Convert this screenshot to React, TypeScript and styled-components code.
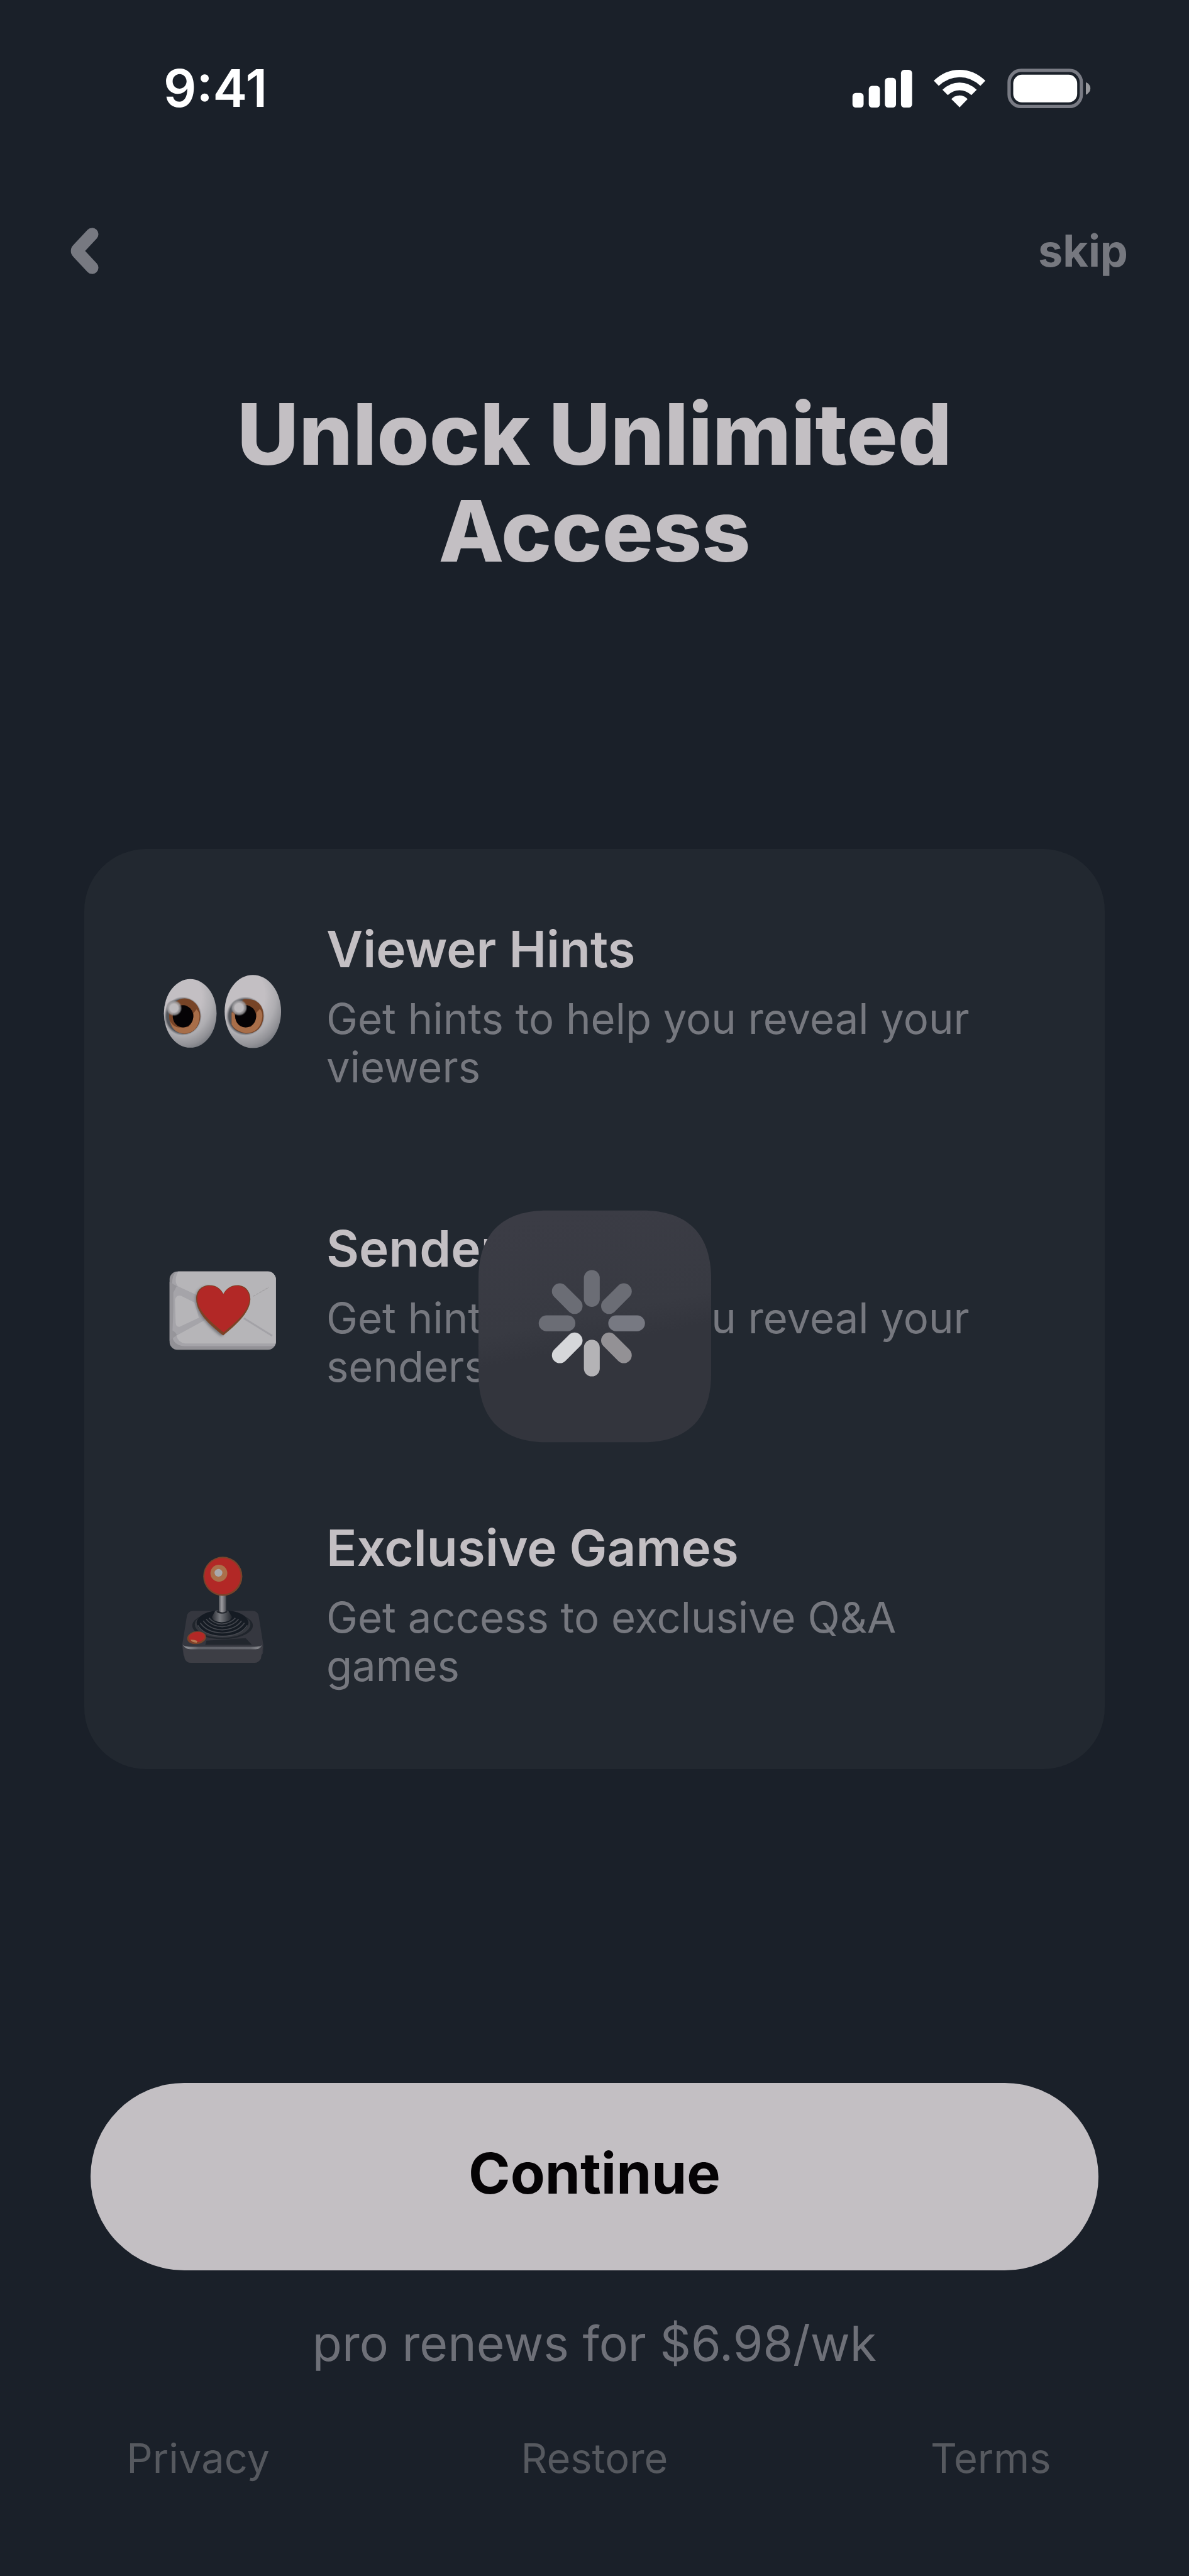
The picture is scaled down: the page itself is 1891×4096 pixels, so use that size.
import React from "react";
import styled, { createGlobalStyle } from "styled-components";

function App() {
  return (
    <>
      <GlobalStyle />
      <Screen>
        <StatusBar>
          <Time>9:41</Time>
          <StatusIcons />
        </StatusBar>
        <NavBar>
          <BackButton type="button" aria-label="Back">
            <svg width="45" height="74" viewBox="73 83 137 224" fill="none">
              <path
                d="M178 114 L109 188 Q102 195 109 202 L178 276"
                stroke="#777981"
                strokeWidth="61"
                strokeLinecap="round"
                strokeLinejoin="round"
              />
            </svg>
          </BackButton>
          <SkipButton type="button">skip</SkipButton>
        </NavBar>
        <Title>Unlock Unlimited Access</Title>
        <Card>
          {features.map((feature) => (
            <Feature key={feature.name}>
              {feature.icon}
              <div>
                <FeatureName>{feature.name}</FeatureName>
                <FeatureText>{feature.text}</FeatureText>
              </div>
            </Feature>
          ))}
          <Loader />
        </Card>
        <ContinueButton type="button">Continue</ContinueButton>
        <Renewal>pro renews for $6.98/wk</Renewal>
        <Footer>
          <FooterLink href="#privacy">Privacy</FooterLink>
          <FooterLink href="#restore">Restore</FooterLink>
          <FooterLink href="#terms">Terms</FooterLink>
        </Footer>
      </Screen>
    </>
  );
}

function StatusIcons() {
  return (
    <svg width="381" height="64" viewBox="105 60 1160 195" aria-hidden="true">
      <g fill="#fff">
        <rect x="110" y="178" width="54" height="71" rx="16" />
        <rect x="189" y="144" width="54" height="105" rx="16" />
        <rect x="267" y="105" width="54" height="144" rx="16" />
        <rect x="345" y="66" width="54" height="183" rx="16" />
        <path d="M504 119 Q559 66 629 66 Q699 66 754 119 L730 144 Q685 102 629 102 Q573 102 528 144 Z" />
        <path d="M546 163 Q583 128 629 128 Q675 128 712 163 L686 189 Q661 165 629 165 Q597 165 572 189 Z" />
        <path d="M589 208 Q606 190 629 190 Q651 190 668 208 L629 248 Z" />
        <rect x="889" y="90" width="310" height="134" rx="42" />
      </g>
      <rect
        x="869"
        y="69"
        width="350"
        height="175"
        rx="58"
        fill="none"
        stroke="#797b84"
        strokeWidth="16"
      />
      <path d="M1241 126 Q1263 136 1263 156 Q1263 176 1241 187 Z" fill="#98999d" />
    </svg>
  );
}

function EyesIcon() {
  return (
    <svg width="190" height="190" viewBox="99 -45 580 580" aria-hidden="true">
      <defs>
        <radialGradient id="eyeWhite" cx="0.36" cy="0.28" r="0.78">
          <stop offset="0.45" stopColor="#c3bfc3" />
          <stop offset="0.7" stopColor="#aeadb1" />
          <stop offset="0.88" stopColor="#919196" />
          <stop offset="1" stopColor="#74777d" />
        </radialGradient>
        <radialGradient id="glint">
          <stop offset="0.5" stopColor="#bdbabd" />
          <stop offset="0.8" stopColor="#98979a" stopOpacity="0.8" />
          <stop offset="1" stopColor="#6c6c70" stopOpacity="0" />
        </radialGradient>
        <radialGradient id="socket">
          <stop offset="0.86" stopColor="#30343a" />
          <stop offset="1" stopColor="#5a5d62" stopOpacity="0" />
        </radialGradient>
        <clipPath id="leftEye">
          <ellipse cx="232" cy="286" rx="128" ry="167" />
        </clipPath>
        <clipPath id="rightEye">
          <ellipse cx="536" cy="277" rx="137" ry="178" />
        </clipPath>
      </defs>
      <g clipPath="url(#leftEye)">
        <rect x="100" y="110" width="264" height="342" fill="url(#eyeWhite)" />
        <ellipse cx="196" cy="299" rx="92" ry="95" fill="url(#socket)" opacity="0.75" />
        <ellipse cx="205" cy="299" rx="76" ry="86" fill="#774427" />
        <path d="M134 322 Q148 352 178 354 L222 352 Q249 330 248 285 L262 266 Q278 278 277 302 Q272 376 205 384 Q145 382 134 322 Z" fill="#a86e49" />
        <ellipse cx="197" cy="300" rx="50" ry="54" fill="#050305" />
        <circle cx="153" cy="260" r="40" fill="url(#glint)" />
      </g>
      <g clipPath="url(#rightEye)">
        <rect x="398" y="98" width="276" height="356" fill="url(#eyeWhite)" />
        <ellipse cx="500" cy="299" rx="94" ry="95" fill="url(#socket)" opacity="0.75" />
        <path d="M433 282 L492 216 Q586 210 588 299 Q582 382 502 384 Q434 372 433 330 Z" fill="#774427" />
        <path d="M433 282 Q446 278 449 302 Q456 344 486 352 L525 352 Q554 330 554 282 L570 264 Q584 280 582 302 Q574 378 502 382 Q450 372 433 340 Z" fill="#a86e49" />
        <ellipse cx="501" cy="300" rx="51" ry="54" fill="#050305" />
        <circle cx="469" cy="258" r="41" fill="url(#glint)" />
      </g>
    </svg>
  );
}

function LetterIcon() {
  return (
    <svg width="190" height="190" viewBox="37 -37 580 580" aria-hidden="true">
      <defs>
        <clipPath id="letter">
          <rect x="69" y="93" width="517" height="381" rx="40" />
        </clipPath>
        <filter id="heartShadow" x="-20%" y="-20%" width="140%" height="140%">
          <feGaussianBlur stdDeviation="7" />
        </filter>
      </defs>
      <g clipPath="url(#letter)">
        <rect x="69" y="93" width="517" height="381" fill="#929196" />
        <path d="M110 93 H586 V456 H140 Q84 450 82 400 V150 Q84 98 110 93 Z" fill="#a5a4a9" />
        <path d="M112 93 H586 V443 H145 Q108 436 104 404 L240 330 V226 L110 165 Q88 140 112 93 Z" fill="#b6b5b8" />
        <path d="M69 143 L110 168 L92 195 L84 380 L110 398 L69 430 Z" fill="#96959a" />
        <path d="M104 165 L240 224 V326 L104 400 L88 372 V196 Z" fill="#a5a4a9" />
        <path d="M96 232 Q102 205 126 212 L190 244 L212 318 L118 362 Q100 364 99 340 Z" fill="#b6b5b8" />
        <path d="M476 214 L552 170" stroke="#a19fa2" strokeWidth="4" strokeDasharray="12 5" />
        <path d="M430 320 L568 406" stroke="#a3a2a7" strokeWidth="9" />
      </g>
      <path
        d="M322 408 C270 372 198 300 196 226 C196 180 232 164 264 166 L400 300 Z"
        fill="#55565c"
        opacity="0.7"
        filter="url(#heartShadow)"
      />
      <path
        d="M330 404 C280 362 200 304 199 226 C199 184 228 160 264 160 C298 160 318 178 331 202 C344 178 366 160 399 160 C436 160 462 188 462 228 C460 300 380 362 330 404 Z"
        fill="#7b4326"
      />
      <path
        d="M332 389 C290 352 207 294 204 226 C204 186 230 163 264 163 C298 163 318 181 331 205 C344 181 366 163 398 163 C432 163 458 190 458 228 C454 294 374 352 332 389 Z"
        fill="#b22826"
      />
    </svg>
  );
}

function JoystickIcon() {
  return (
    <svg width="190" height="190" viewBox="-22 29 580 580" aria-hidden="true">
      <defs>
        <linearGradient id="stick">
          <stop offset="0" stopColor="#55575c" />
          <stop offset="0.4" stopColor="#9c9b9f" />
          <stop offset="1" stopColor="#4a4c52" />
        </linearGradient>
        <linearGradient id="boot">
          <stop offset="0" stopColor="#292c33" />
          <stop offset="0.4" stopColor="#77797e" />
          <stop offset="1" stopColor="#20242b" />
        </linearGradient>
        <linearGradient id="edge">
          <stop offset="0" stopColor="#66686f" />
          <stop offset="0.05" stopColor="#8e8f94" />
          <stop offset="0.2" stopColor="#5f6168" />
          <stop offset="0.85" stopColor="#66686f" />
          <stop offset="0.95" stopColor="#85868b" />
          <stop offset="1" stopColor="#4a4c53" />
        </linearGradient>
      </defs>
      <path d="M72 520 L94 382 Q98 354 126 354 H414 Q440 354 444 382 L466 520 L464 560 L424 606 H114 L78 570 Z" fill="#35373f" />
      <path d="M74 524 Q90 540 112 540 H424 Q448 540 464 524 L454 586 Q442 606 424 606 H114 Q92 606 84 586 Z" fill="#3d3e45" />
      <path d="M190 498 L380 486 L410 518 H184 Z" fill="#22272e" />
      <ellipse cx="268" cy="425" rx="147" ry="66" fill="#20252c" />
      <ellipse cx="268" cy="420" rx="135" ry="64" fill="#34373e" />
      <ellipse cx="268" cy="412" rx="126" ry="62" fill="#151b23" />
      <g fill="none" stroke="#43464d" strokeWidth="5">
        <path d="M148 424 Q176 474 268 478 Q358 474 388 424" />
        <path d="M160 412 Q190 458 266 461 Q344 458 374 412" />
        <path d="M174 402 Q204 443 266 446 Q332 442 360 402" />
        <path d="M188 394 Q216 429 266 431 Q320 428 346 394" />
        <path d="M202 388 Q226 416 264 418 Q308 414 330 388" />
      </g>
      <path d="M216 384 L232 354 Q264 342 296 354 L314 384 Q306 408 264 409 Q222 408 216 384 Z" fill="url(#boot)" />
      <ellipse cx="265" cy="357" rx="26" ry="10" fill="#25282f" />
      <path d="M250 272 H285 V356 Q267 366 250 356 Z" fill="url(#stick)" />
      <circle cx="269" cy="186" r="95" fill="#78432a" />
      <circle cx="268" cy="185" r="88" fill="#b22826" />
      <circle cx="250" cy="171" r="41" fill="#ab6f4a" />
      <circle cx="248" cy="169" r="19" fill="#a9a8ac" />
      <ellipse cx="142" cy="484" rx="46" ry="31" fill="#7b432a" transform="rotate(-8 142 484)" />
      <ellipse cx="143" cy="481" rx="39" ry="25" fill="#b22826" transform="rotate(-8 143 481)" />
      <path d="M112 494 Q128 492 146 500 L142 508 Q120 508 112 494 Z" fill="#b87952" />
      <path d="M74 519 Q88 528 112 528 H422 Q448 528 462 519 Q450 542 424 540 H114 Q86 540 74 519 Z" fill="url(#edge)" />
    </svg>
  );
}

const petals = [
  "#6b6d75",
  "#6b6d75",
  "#777982",
  "#939195",
  "#b4b3b6",
  "#d6d7da",
  "#6b6d75",
  "#6b6d75",
];

function Loader() {
  return (
    <LoaderBox role="status" aria-label="Loading">
      <svg width="370" height="370" viewBox="95 97 1130 1126">
        <defs>
          <linearGradient id="loaderFill" x1="0.4" y1="0" x2="0.6" y2="1">
            <stop offset="0" stopColor="#3b3c45" />
            <stop offset="0.45" stopColor="#383a42" />
            <stop offset="0.58" stopColor="#33353d" />
            <stop offset="1" stopColor="#33353d" />
          </linearGradient>
        </defs>
        <path
          d="M430 97 H890 C1120 97 1225 220 1225 430 V890 C1225 1110 1110 1223 890 1223 H430 C210 1223 95 1110 95 890 V430 C95 220 200 97 430 97 Z"
          fill="url(#loaderFill)"
        />
        {petals.map((color, i) => (
          <rect
            key={i}
            x="607"
            y="387"
            width="77"
            height="178"
            rx="38"
            fill={color}
            transform={`rotate(${i * 45} 645.5 645)`}
          />
        ))}
      </svg>
    </LoaderBox>
  );
}

const features = [
  {
    name: "Viewer Hints",
    text: "Get hints to help you reveal your viewers",
    icon: <EyesIcon />,
  },
  {
    name: "Sender Hints",
    text: "Get hints to help you reveal your senders",
    icon: <LetterIcon />,
  },
  {
    name: "Exclusive Games",
    text: "Get access to exclusive Q&A games",
    icon: <JoystickIcon />,
  },
];

export default App;

const GlobalStyle = createGlobalStyle`
  * {
    box-sizing: border-box;
  }

  body {
    margin: 0;
    background: #1a2029;
    font-family: Inter, "Liberation Sans", sans-serif;
  }

  h1, h2, p, ul {
    margin: 0;
    padding: 0;
  }

  button {
    border: none;
    padding: 0;
    background: none;
    font-family: inherit;
    cursor: pointer;
  }
`;

const Screen = styled.main`
  min-height: 100vh;
  display: flex;
  flex-direction: column;
  background: #1a2029;
`;

const StatusBar = styled.div`
  display: flex;
  align-items: center;
  justify-content: space-between;
  height: 100px;
  margin-top: 91px;
  padding: 0 156px 0 260px;
`;

const Time = styled.span`
  color: #fff;
  font-size: 82px;
  font-weight: 600;
  line-height: 100px;
`;

const NavBar = styled.nav`
  display: flex;
  align-items: center;
  justify-content: space-between;
  height: 100px;
  margin-top: 158px;
  padding: 0 97px 0 112px;
`;

const BackButton = styled.button`
  display: flex;
`;

const SkipButton = styled.button`
  color: #76787f;
  font-size: 70px;
  font-weight: 700;
  line-height: 100px;
`;

const Title = styled.h1`
  margin-top: 164px;
  padding: 0 300px;
  color: #c3bfc3;
  font-size: 135px;
  font-weight: 800;
  line-height: 154px;
  text-align: center;
`;

const Card = styled.ul`
  position: relative;
  display: flex;
  flex-direction: column;
  gap: 202px;
  margin: 429px 134px 0;
  padding: 111px 134px 126px 125px;
  border-radius: 98px;
  background: #222830;
  list-style: none;
`;

const Feature = styled.li`
  display: flex;
  align-items: center;
  gap: 70px;

  svg {
    flex-shrink: 0;
  }
`;

const FeatureName = styled.h2`
  margin-bottom: 24px;
  color: #c3bfc3;
  font-size: 80px;
  font-weight: 600;
  line-height: 96px;
`;

const FeatureText = styled.p`
  color: #76787f;
  font-size: 67px;
  line-height: 77px;
`;

/* sits over the card, a little below its middle */
const LoaderBox = styled.div`
  position: absolute;
  inset: 0;
  display: flex;
  align-items: center;
  justify-content: center;
  padding-top: 54px;
`;

const ContinueButton = styled.button`
  height: 298px;
  margin: 499px 144px 0;
  padding-bottom: 12px;
  border-radius: 149px;
  background: #c3bfc3;
  color: #050305;
  font-size: 90px;
  font-weight: 700;
`;

const Renewal = styled.p`
  margin-top: 66px;
  color: #6e7078;
  font-size: 77px;
  line-height: 100px;
  text-align: center;
`;

const Footer = styled.footer`
  display: grid;
  grid-template-columns: repeat(3, 1fr);
  margin-top: 83px;
`;

const FooterLink = styled.a`
  color: #56595f;
  font-size: 65px;
  line-height: 100px;
  text-align: center;
  text-decoration: none;
`;
